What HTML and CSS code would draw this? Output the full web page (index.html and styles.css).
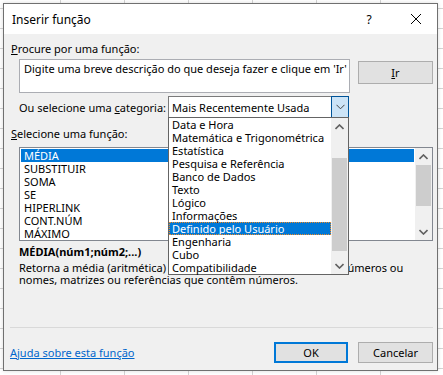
FILE: index.html
```html
<!DOCTYPE html>
<html lang="pt">
<head>
<meta charset="utf-8">
<title>Inserir função</title>
<link rel="stylesheet" href="styles.css">
</head>
<body>
<div class="dialog">
  <div class="titlebar">
    <span class="title">Inserir função</span>
    <span class="help">?</span>
    <svg class="close" width="12" height="12" viewBox="0 0 12 12"><path d="M1 1 L11 11 M11 1 L1 11" stroke="#000" stroke-width="1" fill="none"/></svg>
  </div>
  <div class="content">
    <div class="label l1"><u>P</u>rocure por uma função:</div>
    <div class="search-row">
      <div class="searchbox">Digite uma breve descrição do que deseja fazer e clique em 'Ir'</div>
      <div class="btn btn-ir"><u>I</u>r</div>
    </div>
    <div class="cat-row">
      <span class="cat-label">Ou selecione uma <u>c</u>ategoria:</span>
      <div class="combo">
        <span class="combo-text">Mais Recentemente Usada</span>
        <span class="combo-btn"><svg width="9" height="6" viewBox="0 0 9 6"><path d="M0.5 0.8 L4.5 4.8 L8.5 0.8" stroke="#444" stroke-width="1" fill="none"/></svg></span>
      </div>
    </div>
    <div class="label l2"><u>S</u>elecione uma função:</div>
    <div class="fnlist">
      <ul class="items">
        <li class="sel">MÉDIA</li>
        <li>SUBSTITUIR</li>
        <li>SOMA</li>
        <li>SE</li>
        <li>HIPERLINK</li>
        <li>CONT.NÚM</li>
        <li>MÁXIMO</li>
      </ul>
      <div class="scrollbar">
        <span class="arrow"><svg width="9" height="6" viewBox="0 0 9 6"><path d="M0.5 5 L4.5 1 L8.5 5" stroke="#606060" stroke-width="1.6" fill="none"/></svg></span>
        <span class="thumb fn-thumb"></span>
        <span class="track"></span>
        <span class="arrow"><svg width="9" height="6" viewBox="0 0 9 6"><path d="M0.5 1 L4.5 5 L8.5 1" stroke="#606060" stroke-width="1.6" fill="none"/></svg></span>
      </div>
    </div>
    <div class="sig">MÉDIA(núm1;núm2;...)</div>
    <div class="desc">Retorna a média (aritmética) dos argumentos, que podem ser números ou<br>nomes, matrizes ou referências que contêm números.</div>
    <div class="sep"></div>
    <div class="footer">
      <a class="help-link" href="#">Ajuda sobre esta função</a>
      <div class="btn btn-ok">OK</div>
      <div class="btn btn-cancel">Cancelar</div>
    </div>
  </div>
  <div class="dropdown">
    <ul class="dd-items">
      <li>Data e Hora</li>
      <li>Matemática e Trigonométrica</li>
      <li>Estatística</li>
      <li>Pesquisa e Referência</li>
      <li>Banco de Dados</li>
      <li>Texto</li>
      <li>Lógico</li>
      <li>Informações</li>
      <li class="sel">Definido pelo Usuário</li>
      <li>Engenharia</li>
      <li>Cubo</li>
      <li>Compatibilidade</li>
    </ul>
    <div class="scrollbar">
      <span class="arrow"><svg width="9" height="6" viewBox="0 0 9 6"><path d="M0.5 5 L4.5 1 L8.5 5" stroke="#606060" stroke-width="1.6" fill="none"/></svg></span>
      <span class="gap"></span>
      <span class="thumb dd-thumb"></span>
      <span class="track"></span>
      <span class="arrow"><svg width="9" height="6" viewBox="0 0 9 6"><path d="M0.5 1 L4.5 5 L8.5 1" stroke="#606060" stroke-width="1.6" fill="none"/></svg></span>
    </div>
  </div>
</div>
</body>
</html>
```

FILE: styles.css
```css
html, body {
  margin: 0;
  padding: 0;
}
body {
  width: 443px;
  height: 375px;
  overflow: hidden;
  background-color: #fff;
  background-image:
    linear-gradient(to right, #d4d4d4 1px, transparent 1px),
    linear-gradient(to bottom, #d4d4d4 1px, transparent 1px);
  background-size: 64px 20px;
  background-position: 60px 8px;
  padding: 3px 0 0 3px;
  box-sizing: border-box;
  font-family: "Noto Sans", "Segoe UI", sans-serif;
  font-size: 11px;
  color: #000;
}
.dialog {
  position: relative;
  width: 435px;
  height: 368px;
  box-sizing: border-box;
  border: 1px solid #707070;
  background: #f0f0f0;
  display: flex;
  flex-direction: column;
  box-shadow: 0 0 4px rgba(0,0,0,0.15);
}
.titlebar {
  height: 30px;
  flex: none;
  background: #fff;
  display: flex;
  align-items: center;
  padding-left: 8px;
}
.title {
  font-size: 12px;
  flex: 1;
}
.help {
  width: 12px;
  text-align: center;
  margin-right: 35px;
  font-size: 12px;
}
.close {
  margin-right: 15px;
}
.content {
  flex: 1;
  display: flex;
  flex-direction: column;
  padding: 0 4px 7px 7px;
}
.label {
  line-height: 15px;
}
.l1 { margin-top: 7px; }
.l2 { margin-top: 8px; }
u { text-decoration: underline; text-underline-offset: 1px; }
.search-row {
  display: flex;
  gap: 8px;
  margin: 3px 0 0 8px;
  align-items: flex-start;
}
.searchbox {
  width: 331px;
  height: 34px;
  box-sizing: border-box;
  border: 1px solid #abadb3;
  background: #fff;
  padding: 1px 4px;
  line-height: 15px;
  white-space: nowrap;
  overflow: hidden;
}
.btn {
  box-sizing: border-box;
  background: #e1e1e1;
  border: 1px solid #adadad;
  display: flex;
  align-items: center;
  justify-content: center;
}
.btn-ir {
  width: 75px;
  height: 23px;
  margin-top: 2px;
}
.cat-row {
  display: flex;
  align-items: center;
  margin: 3px 0 0 8px;
}
.cat-label {
  width: 149px;
  white-space: nowrap;
}
.combo {
  width: 181px;
  height: 22px;
  box-sizing: border-box;
  border: 1px solid #7a7a7a;
  background: #fff;
  display: flex;
  align-items: center;
}
.combo-text {
  flex: 1;
  padding-left: 3px;
}
.combo-btn {
  width: 18px;
  height: 22px;
  margin: -1px -1px -1px 0;
  box-sizing: border-box;
  border: 1px solid #005499;
  background: #cce4f7;
  display: flex;
  align-items: center;
  justify-content: center;
}
.fnlist {
  margin: 6px 0 0 8px;
  height: 94px;
  box-sizing: border-box;
  border: 1px solid #828790;
  background: #fff;
  display: flex;
}
.items, .dd-items {
  list-style: none;
  margin: 0;
  flex: 1;
}
.items {
  padding: 1px;
}
.items li, .dd-items li {
  height: 13px;
  line-height: 13px;
  padding-left: 3px;
  white-space: nowrap;
}
.items li.sel {
  background: #0078d7;
  color: #fff;
}
.scrollbar {
  width: 17px;
  flex: none;
  background: #f0f0f0;
  display: flex;
  flex-direction: column;
}
.arrow {
  height: 17px;
  flex: none;
  display: flex;
  align-items: center;
  justify-content: center;
}
.thumb {
  background: #cdcdcd;
  margin: 0 1px;
  flex: none;
}
.fn-thumb { height: 41px; }
.track { flex: 1; }
.gap { height: 23px; flex: none; }
.dd-thumb { height: 93px; }
.sig {
  margin: 3px 0 0 8px;
  line-height: 15px;
  font-weight: bold;
}
.desc {
  margin: 3px 0 0 8px;
  line-height: 12px;
}
.sep {
  margin: auto 0 0 -1px;
  height: 1px;
  background: #d9d9d9;
}
.footer {
  margin-top: 14px;
  display: flex;
  align-items: center;
  gap: 10px;
  height: 21px;
}
.help-link {
  margin-left: -1px;
  flex: 1;
  color: #0066cc;
  text-decoration: underline;
}
.btn-ok {
  width: 74px;
  height: 21px;
  border: 2px solid #0078d7;
}
.btn-cancel {
  width: 75px;
  height: 21px;
}
.dropdown {
  position: absolute;
  left: 164px;
  top: 113px;
  width: 181px;
  height: 158px;
  box-sizing: border-box;
  border: 1px solid #646464;
  background: #fff;
  display: flex;
}
.dd-items {
  padding: 0;
}
.dd-items li.sel {
  background: #0078d7;
  color: #fff;
  outline: 1px dotted #f08a24;
  outline-offset: -1px;
}
```
